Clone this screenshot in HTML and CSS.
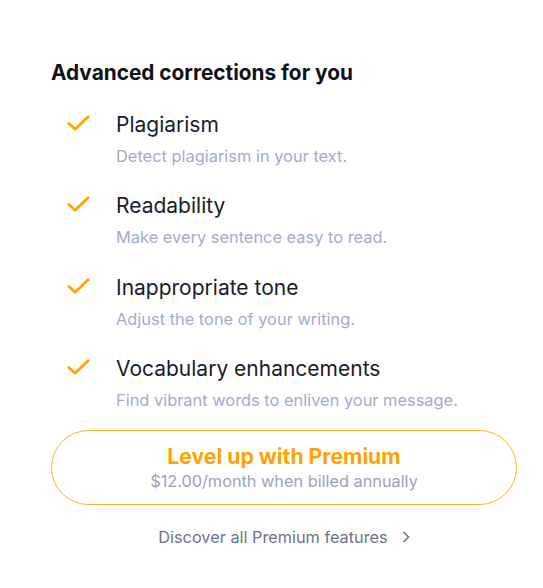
FILE: index.html
```html
<!DOCTYPE html>
<html lang="en">
<head>
    <meta charset="UTF-8">
    <meta name="viewport" content="width=device-width, initial-scale=1.0">
    <title>Advanced corrections</title>
    <link rel="stylesheet" href="styles.css">
</head>
<body>
    <div class="panel">
        <h2 class="panel-title">Advanced corrections for you</h2>

        <ul class="features">
            <li class="feature">
                <svg class="check" viewBox="0 0 24 18" aria-hidden="true"><path d="M2 9.5 L8.5 15.5 L22 2.5"/></svg>
                <div class="feature-text">
                    <div class="feature-name">Plagiarism</div>
                    <div class="feature-desc">Detect plagiarism in your text.</div>
                </div>
            </li>
            <li class="feature">
                <svg class="check" viewBox="0 0 24 18" aria-hidden="true"><path d="M2 9.5 L8.5 15.5 L22 2.5"/></svg>
                <div class="feature-text">
                    <div class="feature-name">Readability</div>
                    <div class="feature-desc">Make every sentence easy to read.</div>
                </div>
            </li>
            <li class="feature">
                <svg class="check" viewBox="0 0 24 18" aria-hidden="true"><path d="M2 9.5 L8.5 15.5 L22 2.5"/></svg>
                <div class="feature-text">
                    <div class="feature-name">Inappropriate tone</div>
                    <div class="feature-desc">Adjust the tone of your writing.</div>
                </div>
            </li>
            <li class="feature">
                <svg class="check" viewBox="0 0 24 18" aria-hidden="true"><path d="M2 9.5 L8.5 15.5 L22 2.5"/></svg>
                <div class="feature-text">
                    <div class="feature-name">Vocabulary enhancements</div>
                    <div class="feature-desc">Find vibrant words to enliven your message.</div>
                </div>
            </li>
        </ul>

        <button class="premium-btn">
            <span class="premium-title">Level up with Premium</span>
            <span class="premium-price">$12.00/month when billed annually</span>
        </button>

        <a class="discover-link" href="#">
            Discover all Premium features
            <svg class="chevron" viewBox="0 0 8 12" aria-hidden="true"><path d="M1.5 1 L6.5 6 L1.5 11"/></svg>
        </a>
    </div>
</body>
</html>
```

FILE: styles.css
```css
:root {
    --orange: #ffa400;
    --orange-border: #fbb52a;
    --dark: #1a1c2b;
    --muted: #a6aacb;
    --gray: #6e7288;
}

* {
    margin: 0;
    padding: 0;
    box-sizing: border-box;
}

body {
    font-family: 'Inter', 'Noto Sans', sans-serif;
    background-color: #ffffff;
    color: var(--dark);
}

.panel {
    width: 466px;
    margin-left: 51px;
    padding-top: 60px;
}

.panel-title {
    font-size: 20.8px;
    line-height: 26px;
    font-weight: 700;
    color: #111218;
    margin-bottom: 25px;
}

.features {
    list-style: none;
    display: flex;
    flex-direction: column;
    gap: 25.4px;
    padding-left: 16px;
}

.feature {
    display: flex;
    align-items: flex-start;
    gap: 26px;
}

.check {
    width: 23px;
    height: 18px;
    margin-top: 3px;
    flex-shrink: 0;
}

.check path {
    fill: none;
    stroke: var(--orange);
    stroke-width: 3;
    stroke-linecap: round;
    stroke-linejoin: round;
}

.feature-name {
    font-size: 21px;
    line-height: 28px;
    font-weight: 400;
    color: var(--dark);
}

.feature-desc {
    font-size: 16.4px;
    line-height: 21px;
    color: var(--muted);
    margin-top: 7px;
}

.premium-btn {
    display: flex;
    flex-direction: column;
    align-items: center;
    width: 100%;
    height: 75px;
    margin-top: 19px;
    padding-top: 12px;
    background-color: #ffffff;
    border: 1px solid var(--orange-border);
    border-radius: 38px;
    font-family: inherit;
    cursor: pointer;
}

.premium-title {
    font-size: 21.2px;
    line-height: 26px;
    font-weight: 700;
    color: var(--orange);
}

.premium-price {
    font-size: 16.3px;
    line-height: 24px;
    color: #9ea1bd;
}

.discover-link {
    display: flex;
    justify-content: center;
    align-items: center;
    gap: 14px;
    margin-top: 22px;
    font-size: 16.3px;
    line-height: 20px;
    color: var(--gray);
    text-decoration: none;
}

.chevron {
    width: 8px;
    height: 12px;
}

.chevron path {
    fill: none;
    stroke: var(--gray);
    stroke-width: 1.5;
}
```
